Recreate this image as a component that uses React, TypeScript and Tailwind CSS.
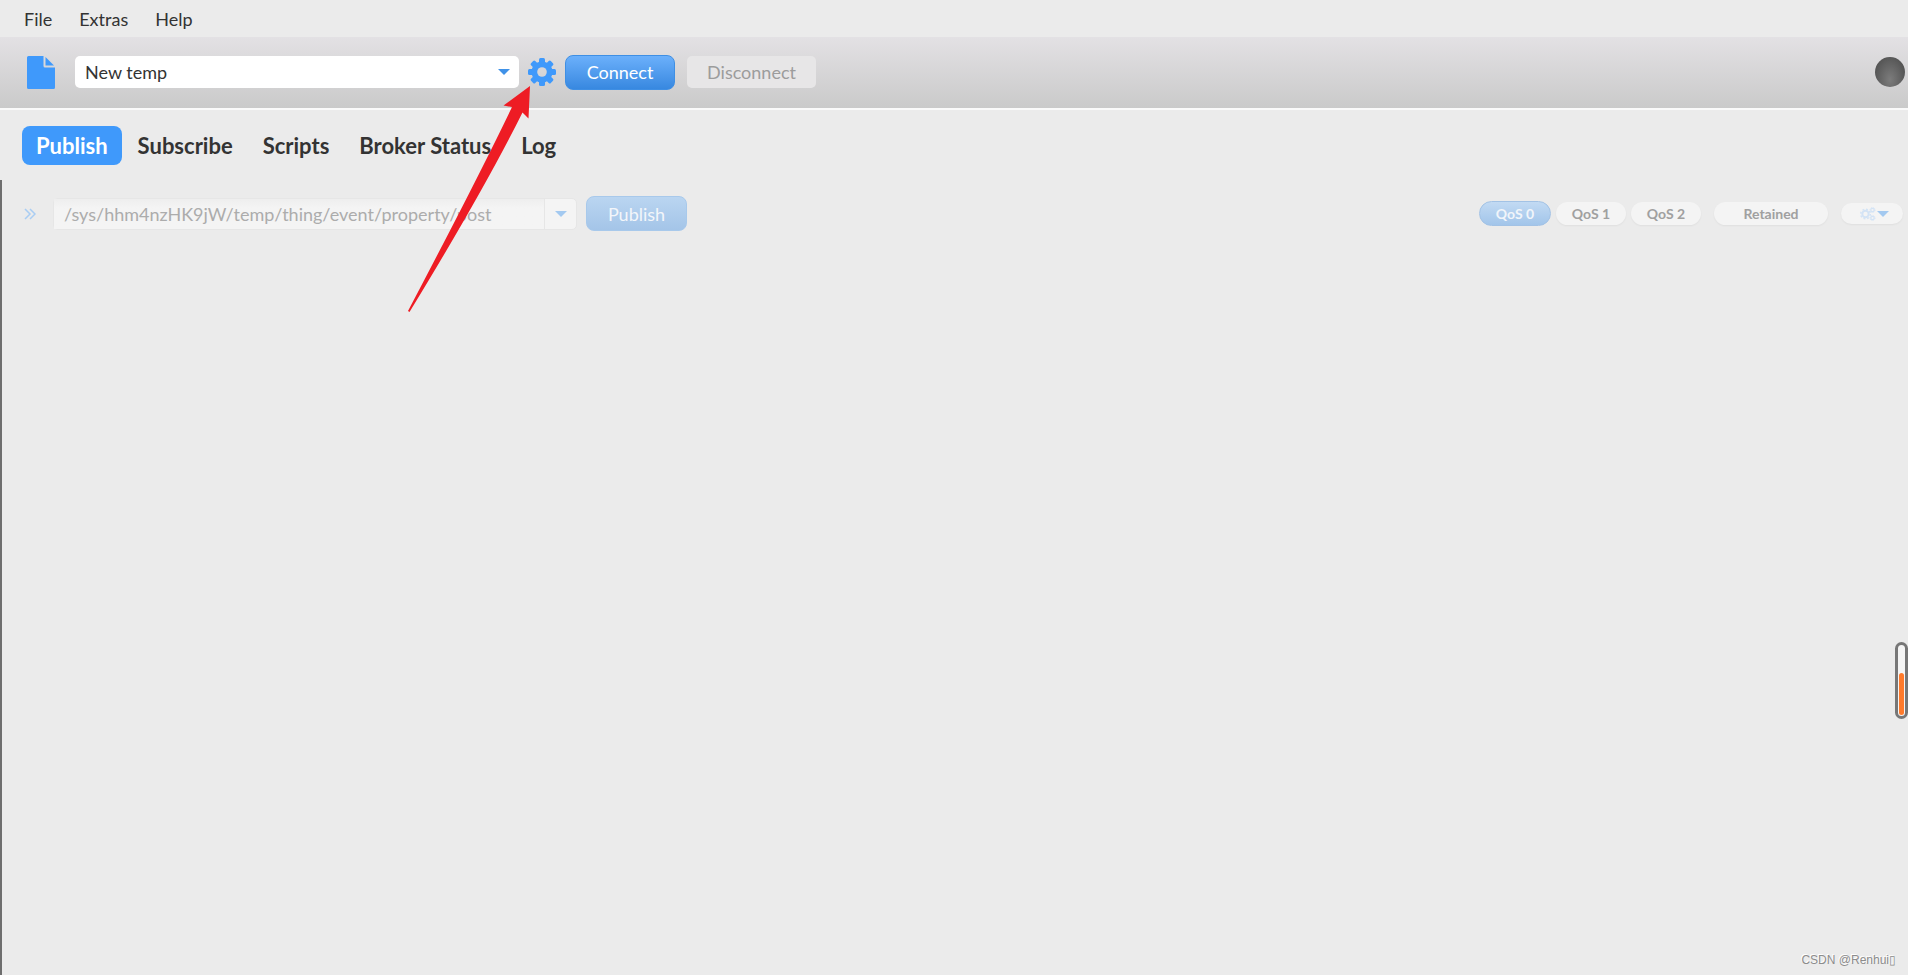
import React, { useState } from "react";
import clsx from "clsx";

const tabs = ["Publish", "Subscribe", "Scripts", "Broker Status", "Log"];
const qosLevels = ["QoS 0", "QoS 1", "QoS 2"];

const DocumentIcon = () => (
  <svg width="28" height="33" viewBox="0 0 28 33" fill="#3f99fb" aria-hidden="true">
    <path d="M1.500 0H16.500V10Q16.500 11.500 18 11.500H28V31.500Q28 33 26.500 33H1.500Q0 33 0 31.500V1.500Q0 0 1.500 0Z" />
    <path d="M18.500 1L27 9.500H18.500Z" />
  </svg>
);

// Gear with eight teeth, drawn in a 28 x 28 box
const GearIcon = ({ size, color }: { size: number; color: string }) => (
  <svg width={size} height={size} viewBox="0 0 28 28" aria-hidden="true">
    <mask id="gear-hole" maskUnits="userSpaceOnUse" x="0" y="0" width="28" height="28">
      <rect width="28" height="28" fill="white" />
      <circle cx="14" cy="14" r="4.800" fill="black" />
    </mask>
    <g mask="url(#gear-hole)" fill={color}>
      {[0, 45, 90, 135].map((angle) => (
        <rect
          key={angle}
          x="11"
          y="0"
          width="6"
          height="28"
          rx="1.500"
          transform={`rotate(${angle} 14 14)`}
        />
      ))}
      <circle cx="14" cy="14" r="10.500" />
    </g>
  </svg>
);

const GearsIcon = () => (
  <svg width="16" height="14" viewBox="0 0 16 14" fill="none" stroke="#d3e3f5" aria-hidden="true">
    <circle cx="5.500" cy="7" r="3.200" strokeWidth="2" />
    <circle cx="5.500" cy="7" r="4.800" strokeWidth="1.500" strokeDasharray="1.900 1.870" />
    <circle cx="12.500" cy="3" r="1.700" strokeWidth="1.200" />
    <circle cx="12.500" cy="3" r="2.500" strokeWidth="1" strokeDasharray="1 0.960" />
    <circle cx="12.500" cy="11" r="1.700" strokeWidth="1.200" />
    <circle cx="12.500" cy="11" r="2.500" strokeWidth="1" strokeDasharray="1 0.960" />
  </svg>
);

const CaretIcon = ({ color }: { color: string }) => (
  <svg width="12" height="6" viewBox="0 0 12 6" fill={color} aria-hidden="true">
    <path d="M0 0H12L6 6Z" />
  </svg>
);

const App = () => {
  const [activeTab, setActiveTab] = useState("Publish");
  const [topic, setTopic] = useState("/sys/hhm4nzHK9jW/temp/thing/event/property/post");

  return (
    <div className="relative flex min-h-screen flex-col overflow-hidden bg-[#ebebeb] font-[Lato,sans-serif] text-lg text-[#333333]">
      {/* Menu bar */}
      <nav className="flex h-[37px] items-center gap-[27px] px-6">
        <button>File</button>
        <button>Extras</button>
        <button>Help</button>
      </nav>

      {/* Connection toolbar */}
      <header className="flex h-[73px] items-center border-b-2 border-[#fafafa] bg-linear-to-b from-[#e3e1e4] to-[#cacaca] pr-[3px] pb-px pl-[27px]">
        <button aria-label="New profile">
          <DocumentIcon />
        </button>
        <div className="relative ml-5 flex w-[444px] items-center">
          <select
            aria-label="Connection profile"
            className="h-8 w-full appearance-none rounded-[5px] bg-white px-2.5"
          >
            <option>New temp</option>
          </select>
          <span className="pointer-events-none absolute right-[9px]">
            <CaretIcon color="#4092e8" />
          </span>
        </div>
        <button aria-label="Settings" className="ml-[9px]">
          <GearIcon size={28} color="#3f99fb" />
        </button>
        <button className="ml-[9px] h-[35px] w-[110px] rounded-lg border border-[#3f8fe4] bg-linear-to-b from-[#6bb0fb] to-[#3788e0] text-white">
          Connect
        </button>
        <button disabled className="ml-3 h-8 w-[129px] rounded-[5px] bg-[#e7e6e7] text-[#9c9c9c]">
          Disconnect
        </button>
        <span
          role="status"
          aria-label="Disconnected"
          className="ml-auto size-[30px] rounded-full bg-radial-[at_50%_75%] from-[#7c7c7c] to-[#484848]"
        />
      </header>

      {/* Tabs */}
      <div role="tablist" className="flex h-[70px] items-center gap-0.5 px-[22px] text-[22px] font-bold">
        {tabs.map((tab) => (
          <button
            key={tab}
            role="tab"
            aria-selected={tab === activeTab}
            onClick={() => setActiveTab(tab)}
            className={clsx("h-[39px] rounded-lg px-3.5 pt-0.5", tab === activeTab && "bg-[#3f99fb] text-white")}
          >
            {tab}
          </button>
        ))}
      </div>

      {/* Publish panel */}
      <main className="flex-1 border-l-2 border-[#6e6e6e] pt-4">
        <div className="flex h-[35px] items-center pr-[5px] pl-[22px]">
          <button aria-label="Show history" disabled>
            <svg width="12" height="12" viewBox="0 0 12 12" fill="none" stroke="#a9cdf3" strokeWidth="1.500">
              <path d="M1 1L6 6L1 11M6 1L11 6L6 11" />
            </svg>
          </button>
          <div className="ml-[17px] flex h-8 w-[524px] rounded-[5px] border border-[#e6e6e6] bg-[#f4f4f4]">
            <input
              aria-label="Topic"
              className="min-w-0 flex-1 bg-linear-to-b from-[#eeeeee] to-[#f4f4f4] to-30% px-2.5 text-[#acacac] outline-none"
              value={topic}
              onChange={(e) => setTopic(e.target.value)}
            />
            <button
              aria-label="Recent topics"
              disabled
              className="flex w-8 items-center justify-center border-l border-[#e6e6e6]"
            >
              <CaretIcon color="#a3c9f0" />
            </button>
          </div>
          <button
            disabled
            className="ml-[9px] h-[35px] w-[101px] rounded-lg border border-[#a8c9eb] bg-linear-to-b from-[#bad5f1] to-[#a4c5e8] text-[#f3f6fa]"
          >
            Publish
          </button>

          <div className="ml-auto flex items-center gap-[5px] text-sm font-bold text-[#a0a0a0]">
            {qosLevels.map((level, index) => (
              <button
                key={level}
                disabled
                className={clsx(
                  "rounded-full",
                  index === 0
                    ? "h-[25px] w-[72px] border border-[#a2c2e5] bg-linear-to-b from-[#c2daf3] to-[#a2c5ea] text-[#f1f5fa]"
                    : "h-[23px] w-[70px] bg-[#f4f4f4] shadow-xs"
                )}
              >
                {level}
              </button>
            ))}
            <button disabled className="ml-2 h-[23px] w-[114px] rounded-full bg-[#f4f4f4] shadow-xs">
              Retained
            </button>
            <button
              aria-label="Publish options"
              disabled
              className="ml-2 flex h-[21px] w-[62px] items-center justify-end gap-px rounded-full bg-[#f4f4f4] pr-3.5 shadow-xs"
            >
              <GearsIcon />
              <CaretIcon color="#a3c9f0" />
            </button>
          </div>
        </div>
      </main>

      {/* Arrow pointing at the settings gear */}
      <svg
        className="pointer-events-none absolute top-[84px] left-[404px]"
        width="130"
        height="232"
        viewBox="404 84 130 232"
        fill="#ee1c24"
        aria-hidden="true"
      >
        <path d="M530 86L503.500 105.500L512 107Q478 178 408 311L409.500 312Q484 190 522.500 112.500L528.500 118.500Z" />
      </svg>

      {/* Level gauge on the window edge */}
      <div className="absolute top-[642px] right-0 flex h-[77px] w-[13px] items-end rounded-full border-3 border-[#777777] bg-[#f5f5f5] px-px pb-px">
        <div className="h-[42px] w-full rounded-full bg-[#ff7a2b]" />
      </div>

      <span className="absolute right-3 bottom-[5px] font-['Liberation_Sans',sans-serif] text-xs leading-5 text-[#8c8c8c] [text-shadow:-1px_-1px_0_#ffffff]">
        CSDN @Renhui▯
      </span>
    </div>
  );
};

export default App;
